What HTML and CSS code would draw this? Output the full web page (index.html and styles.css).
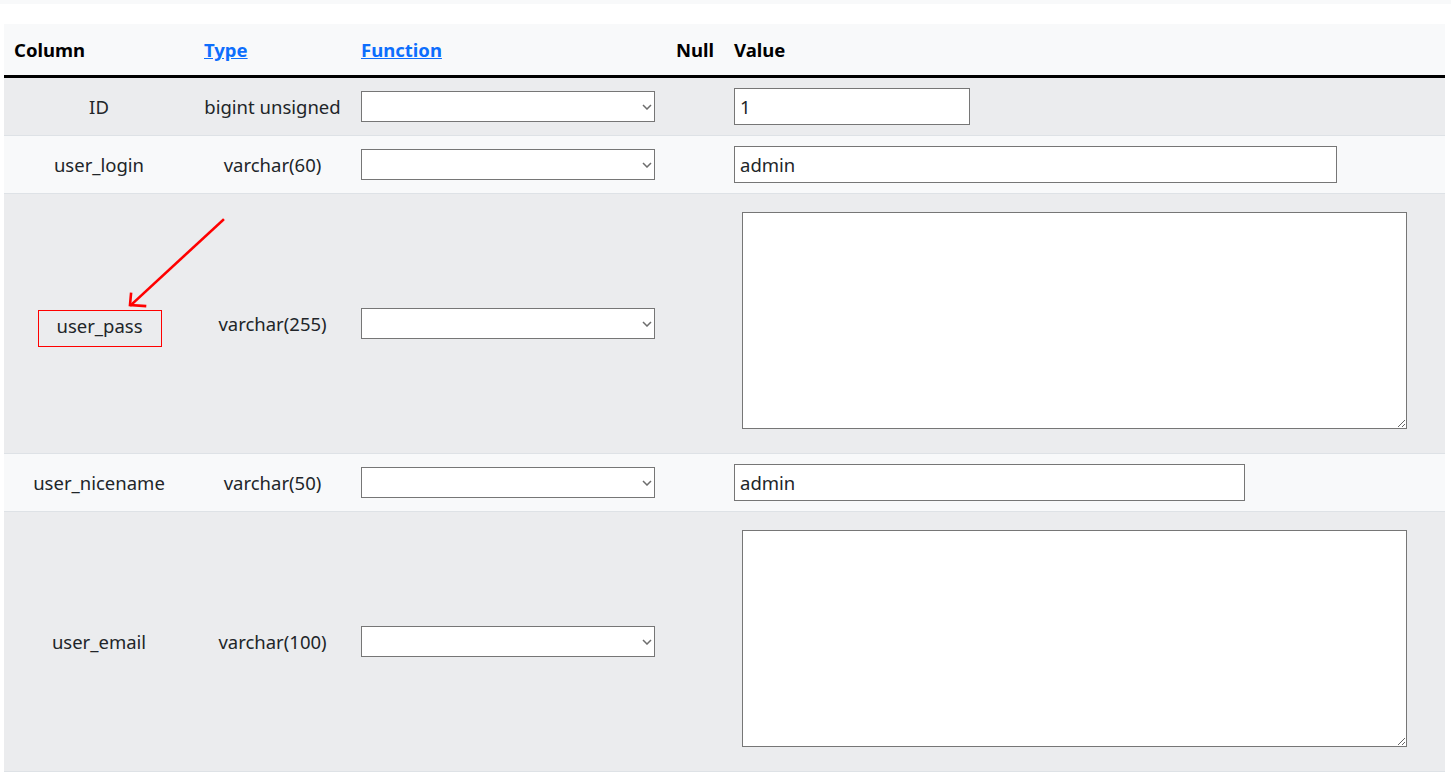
FILE: index.html
```html
<!DOCTYPE html>
<html lang="en">
<head>
<meta charset="utf-8">
<title>Edit row</title>
<link rel="stylesheet" href="styles.css">
</head>
<body>
<div class="topbar"></div>
<div class="wrap">
  <table class="edit">
    <colgroup>
      <col class="c-col"><col class="c-type"><col class="c-fn"><col class="c-null"><col class="c-val">
    </colgroup>
    <thead>
      <tr>
        <th class="left">Column</th>
        <th class="left"><a href="#">Type</a></th>
        <th class="left"><a href="#">Function</a></th>
        <th class="right">Null</th>
        <th class="left">Value</th>
      </tr>
    </thead>
    <tbody>
      <tr class="odd">
        <td class="name">ID</td>
        <td class="type">bigint unsigned</td>
        <td class="fn"><span class="selwrap"><select class="sel"><option></option></select><svg class="chev" width="10" height="6" viewBox="0 0 10 6"><path d="M1 1 L5 5 L9 1" fill="none" stroke="#6d6d6d" stroke-width="1.5"/></svg></span></td>
        <td></td>
        <td class="val"><input class="inp w1" type="text" value="1"></td>
      </tr>
      <tr class="even">
        <td class="name">user_login</td>
        <td class="type">varchar(60)</td>
        <td class="fn"><span class="selwrap"><select class="sel"><option></option></select><svg class="chev" width="10" height="6" viewBox="0 0 10 6"><path d="M1 1 L5 5 L9 1" fill="none" stroke="#6d6d6d" stroke-width="1.5"/></svg></span></td>
        <td></td>
        <td class="val"><input class="inp w2" type="text" value="admin"></td>
      </tr>
      <tr class="odd">
        <td class="name"><span class="mark">user_pass</span></td>
        <td class="type">varchar(255)</td>
        <td class="fn"><span class="selwrap"><select class="sel"><option></option></select><svg class="chev" width="10" height="6" viewBox="0 0 10 6"><path d="M1 1 L5 5 L9 1" fill="none" stroke="#6d6d6d" stroke-width="1.5"/></svg></span></td>
        <td></td>
        <td class="val"><textarea class="ta"></textarea></td>
      </tr>
      <tr class="even">
        <td class="name">user_nicename</td>
        <td class="type">varchar(50)</td>
        <td class="fn"><span class="selwrap"><select class="sel"><option></option></select><svg class="chev" width="10" height="6" viewBox="0 0 10 6"><path d="M1 1 L5 5 L9 1" fill="none" stroke="#6d6d6d" stroke-width="1.5"/></svg></span></td>
        <td></td>
        <td class="val"><input class="inp w3" type="text" value="admin"></td>
      </tr>
      <tr class="odd">
        <td class="name">user_email</td>
        <td class="type">varchar(100)</td>
        <td class="fn"><span class="selwrap"><select class="sel"><option></option></select><svg class="chev" width="10" height="6" viewBox="0 0 10 6"><path d="M1 1 L5 5 L9 1" fill="none" stroke="#6d6d6d" stroke-width="1.5"/></svg></span></td>
        <td></td>
        <td class="val"><textarea class="ta"></textarea></td>
      </tr>
    </tbody>
  </table>
  <svg class="arrow" width="120" height="110" viewBox="0 0 120 110">
    <g fill="none" stroke="#f00" stroke-width="2.6" stroke-linecap="square" stroke-linejoin="miter">
      <line x1="104" y1="5" x2="12" y2="90"/>
      <polyline points="12,79 11,90 26,91"/>
    </g>
  </svg>
</div>
</body>
</html>
```
FILE: styles.css
```css
html, body {
  margin: 0;
  padding: 0;
  background: #fff;
}
body {
  font-family: "Noto Sans", "Open Sans", sans-serif;
  font-size: 18.5px;
  color: #212529;
}
.topbar {
  height: 4px;
  background: #f8f9fa;
}
.wrap {
  position: relative;
  margin: 20px 6px 0 4px;
}
.edit {
  width: 1441px;
  border-collapse: collapse;
  table-layout: fixed;
}
.c-col { width: 190px; }
.c-type { width: 157px; }
.c-fn { width: 313px; }
.c-null { width: 60px; }
.c-val { width: 721px; }

.edit thead tr {
  background: #f8f9fa;
  border-bottom: 3px solid #000;
}
.edit th {
  height: 52px;
  padding: 0 10px;
  font-weight: 700;
  font-size: 18.5px;
  color: #000;
  box-sizing: border-box;
}
.edit th.left { text-align: left; }
.edit th.right { text-align: right; }
.edit th a {
  color: #0d6efd;
  text-decoration: underline;
}
.edit td {
  padding: 10px;
  vertical-align: middle;
}
.edit tbody tr { border-bottom: 1px solid #dee2e6; }
.edit tr.odd { background: #ebecee; }
.edit tr.even { background: #f8f9fa; }
.edit td.name, .edit td.type { text-align: center; }
.selwrap {
  position: relative;
  display: block;
  width: 294px;
}
.sel {
  display: block;
  width: 294px;
  height: 31px;
  margin: 0;
  padding: 0 20px 0 4px;
  border: 1px solid #767676;
  border-radius: 0;
  background: #fff;
  font-family: inherit;
  font-size: 15px;
  -webkit-appearance: none;
  appearance: none;
}
.chev {
  position: absolute;
  right: 3px;
  top: 13px;
}
.inp {
  display: block;
  box-sizing: border-box;
  height: 37px;
  margin: 0;
  padding: 0 5px;
  border: 1px solid #767676;
  border-radius: 0;
  font-family: inherit;
  font-size: 18.5px;
  color: #212529;
  background: #fff;
}
.w1 { width: 236px; }
.w2 { width: 603px; }
.w3 { width: 511px; }
.ta {
  display: block;
  box-sizing: border-box;
  width: 665px;
  height: 217px;
  margin: 8px 0 14px 8px;
  border: 1px solid #767676;
  border-radius: 0;
  background: #fff;
  font-family: inherit;
}
.mark {
  display: inline-block;
  padding: 2px 18px 8px 17px;
  margin: 11px 0 0 2px;
  border: 1px solid #f00;
}
.arrow {
  position: absolute;
  left: 115px;
  top: 191px;
}
```
